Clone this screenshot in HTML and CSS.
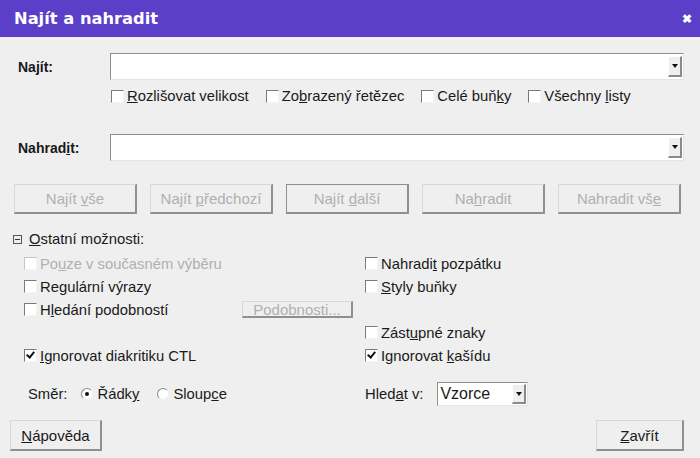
FILE: index.html
```html
<!DOCTYPE html>
<html lang="cs">
  <head>
    <meta charset="UTF-8" />
    <title>Najít a nahradit</title>
    <link rel="stylesheet" href="styles.css">
  </head>
  <body>
    <div class="dialog">
      <div class="titlebar">
        <span class="title">Najít a nahradit</span>
        <span class="close">✖</span>
      </div>
      <div class="content">
        <div class="field-row find-row">
          <label class="field-label">Najít:</label>
          <div class="combo"><span class="combo-btn"><span class="arrow"></span></span></div>
        </div>
        <div class="check-line">
          <span class="check"><span class="box"></span><span><u>R</u>ozlišovat velikost</span></span>
          <span class="check"><span class="box"></span><span>Zo<u>b</u>razený řetězec</span></span>
          <span class="check"><span class="box"></span><span>Celé buň<u>k</u>y</span></span>
          <span class="check"><span class="box"></span><span>Všechny <u>l</u>isty</span></span>
        </div>
        <div class="field-row replace-row">
          <label class="field-label">Nahrad<u>i</u>t:</label>
          <div class="combo"><span class="combo-btn"><span class="arrow"></span></span></div>
        </div>
        <div class="actions">
          <button class="btn" disabled>Najít <u>v</u>še</button>
          <button class="btn" disabled>Najít <u>p</u>ředchozí</button>
          <button class="btn default" disabled>Najít <u>d</u>alší</button>
          <button class="btn" disabled>Na<u>h</u>radit</button>
          <button class="btn" disabled>Nahradit vš<u>e</u></button>
        </div>
        <div class="expander"><span class="minus"></span><span><u>O</u>statní možnosti:</span></div>
        <div class="options">
          <div class="opt disabled"><span class="box"></span><span>Po<u>u</u>ze v současném výběru</span></div>
          <div class="opt"><span class="box"></span><span>Nahradi<u>t</u> pozpátku</span></div>
          <div class="opt"><span class="box"></span><span>Re<u>g</u>ulární výrazy</span></div>
          <div class="opt"><span class="box"></span><span><u>S</u>tyly buňky</span></div>
          <div class="opt"><span class="box"></span><span class="opt-text">H<u>l</u>edání podobností</span><button class="btn small" disabled>Podobnosti...</button></div>
          <div class="opt"></div>
          <div class="opt"></div>
          <div class="opt"><span class="box"></span><span>Zást<u>u</u>pné znaky</span></div>
          <div class="opt"><span class="box checked"></span><span><u>I</u>gnorovat diakritiku CTL</span></div>
          <div class="opt"><span class="box checked"></span><span>Ignorovat <u>k</u>ašídu</span></div>
        </div>
        <div class="bottom-options">
          <div class="direction">
            <span class="dir-label">Směr:</span>
            <span class="radio-item"><span class="radio on"></span><span>Řádk<u>y</u></span></span>
            <span class="radio-item"><span class="radio"></span><span>Sloup<u>c</u>e</span></span>
          </div>
          <div class="search-in">
            <span>Hled<u>a</u>t v:</span>
            <div class="select"><span>Vzorce</span><span class="combo-btn"><span class="arrow"></span></span></div>
          </div>
        </div>
        <div class="footer">
          <button class="btn foot"><u>N</u>ápověda</button>
          <button class="btn foot"><u>Z</u>avřít</button>
        </div>
      </div>
    </div>
  </body>
</html>
```

FILE: styles.css
```css
* {
  box-sizing: border-box;
}
html,
body {
  margin: 0;
  padding: 0;
}
body {
  background: #efefef;
  color: #1a1a1a;
  font-family: "Liberation Sans", Arial, sans-serif;
  font-size: 14.8px;
}
.dialog {
  width: 700px;
  height: 458px;
  background: #efefef;
  overflow: hidden;
}
.titlebar {
  height: 37px;
  background: #5c3fc9;
  color: #fff;
  display: flex;
  align-items: center;
  justify-content: space-between;
  padding: 0 8px 0 14px;
}
.title {
  font-family: "DejaVu Sans", sans-serif;
  font-weight: bold;
  font-size: 16.3px;
}
.close {
  font-size: 12px;
  font-weight: bold;
}
.content {
  padding: 16px 16px 0 18px;
}
.field-row {
  display: flex;
  align-items: center;
  height: 27px;
}
.field-label {
  width: 92px;
  font-weight: bold;
  font-size: 14px;
}
.combo {
  flex: 1;
  height: 27px;
  background: #fff;
  border: 1px solid #8e8e8e;
  border-right-color: #e4e4e4;
  border-bottom-color: #e4e4e4;
  display: flex;
  justify-content: flex-end;
  align-items: center;
  padding-right: 1px;
}
.combo-btn {
  width: 14px;
  height: 21px;
  background: #efefef;
  border: 1px solid #fff;
  border-right: 2px solid #8a8a8a;
  border-bottom: 2px solid #8a8a8a;
  display: flex;
  align-items: center;
  justify-content: center;
  flex: none;
}
.arrow {
  width: 0;
  height: 0;
  border-left: 3px solid transparent;
  border-right: 3px solid transparent;
  border-top: 4px solid #111;
}
.check-line {
  display: flex;
  gap: 17px;
  padding-left: 93px;
  margin-top: 8px;
  height: 16px;
  align-items: center;
}
.check,
.opt {
  display: flex;
  align-items: center;
}
.box {
  width: 13px;
  height: 13px;
  background: #fff;
  border: 1px solid #7a7a7a;
  border-right-color: #f4f4f4;
  border-bottom-color: #f4f4f4;
  margin-right: 3px;
  flex: none;
  position: relative;
}
.box.checked::after {
  content: "";
  position: absolute;
  left: 3px;
  top: 0px;
  width: 3px;
  height: 6px;
  border: solid #111;
  border-width: 0 2px 2px 0;
  transform: rotate(40deg);
}
.replace-row {
  margin-top: 30px;
}
.actions {
  display: flex;
  gap: 13px;
  margin: 23px 0 0 -4px;
}
.btn {
  font-family: inherit;
  font-size: 15px;
  background: #efefef;
  color: #1a1a1a;
  border: 1px solid #d8d8d8;
  border-right: 2px solid #8f8f8f;
  border-bottom: 2px solid #8f8f8f;
  padding: 0;
}
.btn:disabled {
  color: #b0b0b0;
}
.actions .btn {
  width: 123px;
  height: 30px;
}
.btn.default {
  border-color: #8f8f8f;
  border-width: 1px 2px 2px 1px;
}
.expander {
  display: flex;
  align-items: center;
  margin: 17px 0 0 -5px;
  height: 16px;
}
.minus {
  width: 9px;
  height: 9px;
  border: 1px solid #555;
  margin-right: 7px;
  position: relative;
}
.minus::after {
  content: "";
  position: absolute;
  left: 1px;
  right: 1px;
  top: 3px;
  height: 1px;
  background: #333;
}
.options {
  display: grid;
  grid-template-columns: 341px 1fr;
  grid-auto-rows: 23px;
  margin: 5px 0 0 6px;
}
.opt.disabled {
  color: #b0b0b0;
}
.opt.disabled .box {
  border-color: #c4c4c4 #f4f4f4 #f4f4f4 #c4c4c4;
}
.opt-text {
  width: 202px;
}
.btn.small {
  width: 111px;
  height: 17px;
  line-height: 13px;
  overflow: hidden;
}
.bottom-options {
  display: flex;
  align-items: center;
  height: 24px;
  margin-top: 15px;
}
.direction {
  width: 347px;
  display: flex;
  align-items: center;
  padding-left: 10px;
}
.dir-label {
  margin-right: 14px;
}
.radio-item {
  display: flex;
  align-items: center;
  margin-right: 18px;
}
.radio {
  width: 12px;
  height: 12px;
  border-radius: 50%;
  background: #fff;
  border: 1px solid #8a8a8a;
  border-right-color: #f0f0f0;
  border-bottom-color: #f0f0f0;
  margin-right: 4px;
  position: relative;
}
.radio.on::after {
  content: "";
  position: absolute;
  left: 3px;
  top: 3px;
  width: 4px;
  height: 4px;
  border-radius: 50%;
  background: #111;
}
.search-in {
  display: flex;
  align-items: center;
  gap: 14px;
}
.select {
  width: 91px;
  height: 24px;
  background: #fff;
  border: 1px solid #8e8e8e;
  border-right-color: #e4e4e4;
  border-bottom-color: #e4e4e4;
  display: flex;
  align-items: center;
  justify-content: space-between;
  padding: 0 1px 0 2px;
  font-size: 16px;
}
.select .combo-btn {
  height: 20px;
}
.footer {
  display: flex;
  justify-content: space-between;
  margin: 14px 0 0 -8px;
}
.btn.foot {
  height: 31px;
  padding: 0;
}
.footer .btn.foot:first-child {
  width: 92px;
}
.footer .btn.foot:last-child {
  width: 88px;
}
```
